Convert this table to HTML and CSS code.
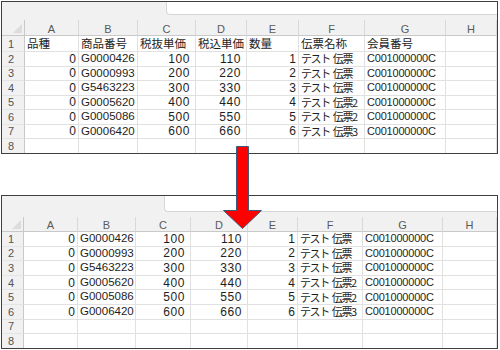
FILE: index.html
```html
<!DOCTYPE html>
<html lang="ja">
<head>
<meta charset="utf-8">
<link rel="stylesheet" href="styles.css">
</head>
<body>
<div class="page">
  <div class="sheet sheet-top">
    <div class="strip"><div class="fbox"></div></div>
    <div class="grid">
      <div class="hc corner"><span class="tri"></span></div><div class="hc">A</div><div class="hc">B</div><div class="hc">C</div><div class="hc">D</div><div class="hc">E</div><div class="hc">F</div><div class="hc">G</div><div class="hc">H</div>
      <div class="rh r1">1</div><div class="c jp r1">品種</div><div class="c jp r1">商品番号</div><div class="c jp r1">税抜単価</div><div class="c jp r1">税込単価</div><div class="c jp r1">数量</div><div class="c jp r1">伝票名称</div><div class="c jp r1">会員番号</div><div class="c r1"></div>
      <div class="rh">2</div><div class="c n">0</div><div class="c g">G0000426</div><div class="c n w">100</div><div class="c n w">110</div><div class="c n">1</div><div class="c jp k">テスト 伝票</div><div class="c m">C001000000C</div><div class="c"></div>
      <div class="rh">3</div><div class="c n">0</div><div class="c g">G0000993</div><div class="c n w">200</div><div class="c n w">220</div><div class="c n">2</div><div class="c jp k">テスト 伝票</div><div class="c m">C001000000C</div><div class="c"></div>
      <div class="rh">4</div><div class="c n">0</div><div class="c g">G5463223</div><div class="c n w">300</div><div class="c n w">330</div><div class="c n">3</div><div class="c jp k">テスト 伝票</div><div class="c m">C001000000C</div><div class="c"></div>
      <div class="rh">5</div><div class="c n">0</div><div class="c g">G0005620</div><div class="c n w">400</div><div class="c n w">440</div><div class="c n">4</div><div class="c jp k">テスト 伝票2</div><div class="c m">C001000000C</div><div class="c"></div>
      <div class="rh">6</div><div class="c n">0</div><div class="c g">G0005086</div><div class="c n w">500</div><div class="c n w">550</div><div class="c n">5</div><div class="c jp k">テスト 伝票2</div><div class="c m">C001000000C</div><div class="c"></div>
      <div class="rh">7</div><div class="c n">0</div><div class="c g">G0006420</div><div class="c n w">600</div><div class="c n w">660</div><div class="c n">6</div><div class="c jp k">テスト 伝票3</div><div class="c m">C001000000C</div><div class="c"></div>
      <div class="rh">8</div><div class="c"></div><div class="c"></div><div class="c"></div><div class="c"></div><div class="c"></div><div class="c"></div><div class="c"></div><div class="c"></div>
    </div>
  </div>

  <div class="sheet sheet-bottom">
    <div class="strip"><div class="fbox"></div></div>
    <div class="grid">
      <div class="hc corner"><span class="tri"></span></div><div class="hc">A</div><div class="hc">B</div><div class="hc">C</div><div class="hc">D</div><div class="hc">E</div><div class="hc">F</div><div class="hc">G</div><div class="hc">H</div>
      <div class="rh">1</div><div class="c n">0</div><div class="c g">G0000426</div><div class="c n w">100</div><div class="c n w">110</div><div class="c n">1</div><div class="c jp k">テスト 伝票</div><div class="c m">C001000000C</div><div class="c"></div>
      <div class="rh">2</div><div class="c n">0</div><div class="c g">G0000993</div><div class="c n w">200</div><div class="c n w">220</div><div class="c n">2</div><div class="c jp k">テスト 伝票</div><div class="c m">C001000000C</div><div class="c"></div>
      <div class="rh">3</div><div class="c n">0</div><div class="c g">G5463223</div><div class="c n w">300</div><div class="c n w">330</div><div class="c n">3</div><div class="c jp k">テスト 伝票</div><div class="c m">C001000000C</div><div class="c"></div>
      <div class="rh">4</div><div class="c n">0</div><div class="c g">G0005620</div><div class="c n w">400</div><div class="c n w">440</div><div class="c n">4</div><div class="c jp k">テスト 伝票2</div><div class="c m">C001000000C</div><div class="c"></div>
      <div class="rh">5</div><div class="c n">0</div><div class="c g">G0005086</div><div class="c n w">500</div><div class="c n w">550</div><div class="c n">5</div><div class="c jp k">テスト 伝票2</div><div class="c m">C001000000C</div><div class="c"></div>
      <div class="rh">6</div><div class="c n">0</div><div class="c g">G0006420</div><div class="c n w">600</div><div class="c n w">660</div><div class="c n">6</div><div class="c jp k">テスト 伝票3</div><div class="c m">C001000000C</div><div class="c"></div>
      <div class="rh">7</div><div class="c"></div><div class="c"></div><div class="c"></div><div class="c"></div><div class="c"></div><div class="c"></div><div class="c"></div><div class="c"></div>
      <div class="rh">8</div><div class="c"></div><div class="c"></div><div class="c"></div><div class="c"></div><div class="c"></div><div class="c"></div><div class="c"></div><div class="c"></div>
    </div>
  </div>

  <svg class="arrow" width="42" height="86" viewBox="0 0 42 86">
    <polygon points="14.5,1.5 26.5,1.5 26.5,65.5 39.5,65.5 20.5,83.5 1.5,65.5 14.5,65.5" fill="#ff0000" stroke="#3d5a78" stroke-width="1"/>
  </svg>
</div>
</body>
</html>
```

FILE: styles.css
```css
html, body {
  margin: 0;
  padding: 0;
  background: #ffffff;
}

.page {
  position: relative;
  width: 500px;
  height: 350px;
  overflow: hidden;
  padding-top: 1px;
  box-sizing: border-box;
  font-family: "Liberation Sans", Arial, "Noto Sans CJK JP", sans-serif;
  color: #1e1e1e;
}

.sheet {
  margin-left: 1px;
  width: 497px;
  box-sizing: border-box;
  border: 1px solid #3f3f3f;
  background: #ffffff;
  overflow: hidden;
}

.sheet-top {
  height: 153px;
}

.sheet-bottom {
  margin-top: 41px;
  height: 154px;
}

.strip {
  background: #f1f1f1;
  display: flex;
  justify-content: flex-end;
  align-items: flex-start;
}

.sheet-top .strip { height: 18px; }
.sheet-bottom .strip { height: 21px; }

.fbox {
  background: #ffffff;
  border-left: 1px solid #d6d6d6;
  border-bottom: 1px solid #d6d6d6;
  border-bottom-left-radius: 4px;
  box-sizing: border-box;
}

.sheet-top .fbox { width: 331px; height: 13px; }
.sheet-bottom .fbox { width: 333px; height: 16px; }

.grid {
  display: grid;
}

.sheet-top .grid {
  grid-template-columns: 23px 54px 59px 58px 51px 52px 66px 81px 51px;
  grid-template-rows: 16px 16px repeat(7, 14.5px);
}

.sheet-bottom .grid {
  grid-template-columns: 22px 54px 58px 55px 57px 50px 65px 80px 54px;
  grid-template-rows: 15px repeat(8, 14.6px);
}

.hc {
  background: #f1f1f1;
  border-right: 1px solid #d9d9d9;
  border-bottom: 1px solid #c9c9c9;
  box-sizing: border-box;
  font-size: 11px;
  color: #5a5a5a;
  display: flex;
  align-items: center;
  justify-content: center;
  padding-top: 2px;
}

.corner {
  position: relative;
  border-right-color: #c9c9c9;
}

.tri {
  position: absolute;
  right: 2px;
  bottom: 2px;
  width: 0;
  height: 0;
  border-left: 9px solid transparent;
  border-bottom: 9px solid #dcdcdc;
}

.rh {
  background: #f1f1f1;
  border-right: 1px solid #c9c9c9;
  border-bottom: 1px solid #e4e4e4;
  box-sizing: border-box;
  font-size: 11px;
  color: #555555;
  display: flex;
  align-items: center;
  padding-left: 6px;
}

.c {
  border-right: 1px solid #e1e1e1;
  border-bottom: 1px solid #e1e1e1;
  box-sizing: border-box;
  font-size: 12px;
  display: flex;
  align-items: center;
  white-space: pre;
  overflow: visible;
  padding: 0 2px;
  line-height: 1;
}

.n {
  justify-content: flex-end;
  padding-right: 2px;
}

.w {
  letter-spacing: 0.6px;
  padding-right: 5px;
}

.g {
  font-size: 11.5px;
}

.m {
  font-size: 11px;
  letter-spacing: -0.2px;
}

.jp {
  font-family: "Noto Sans CJK JP", sans-serif;
  font-size: 11.5px;
}

.k {
  font-size: 11px;
  letter-spacing: -1.4px;
  word-spacing: 2px;
}

.arrow {
  position: absolute;
  left: 222px;
  top: 145px;
}
```
